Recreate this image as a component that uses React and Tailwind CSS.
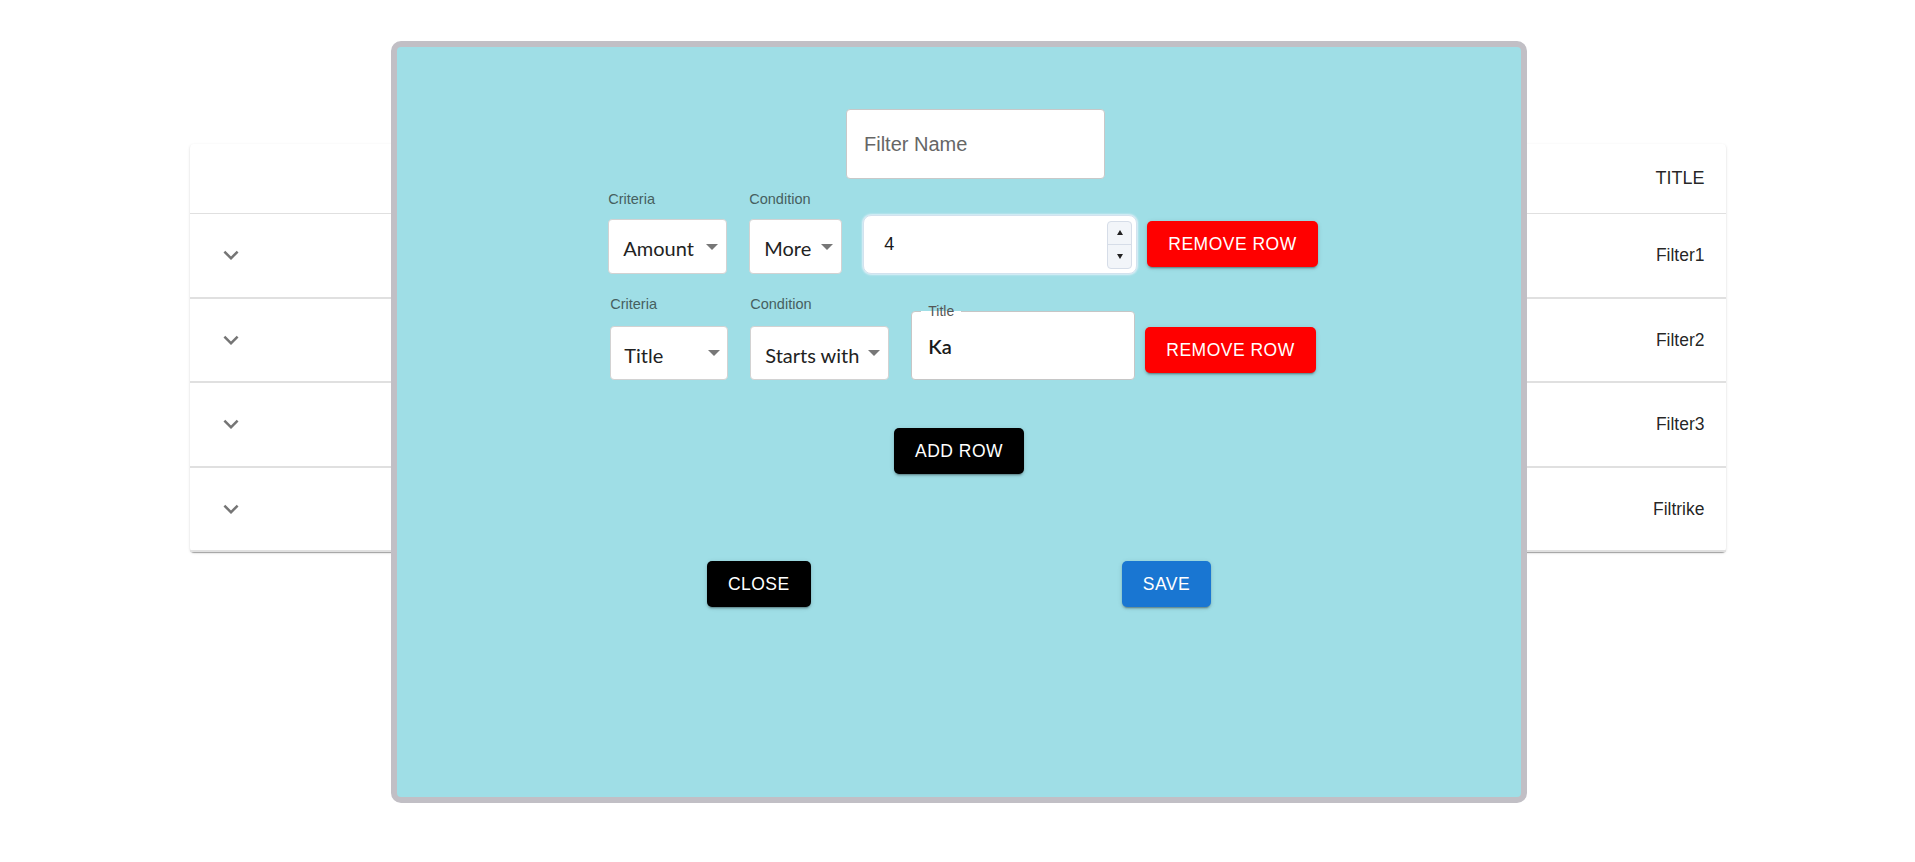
const ROWS = ["Filter1", "Filter2", "Filter3", "Filtrike"];

const SANS = "font-['Liberation_Sans',Arial,sans-serif]";
const LATO = "font-['Lato','Liberation_Sans',sans-serif]";

function Chevron() {
  return (
    <svg viewBox="0 0 24 24" className="w-[30px] h-[30px] fill-[#757575]">
      <path d="M7.41 8.59 12 13.17l4.59-4.58L18 10l-6 6-6-6 1.41-1.41z" />
    </svg>
  );
}

function Caret() {
  return (
    <span className="w-0 h-0 border-l-[6px] border-r-[6px] border-t-[6px] border-l-transparent border-r-transparent border-t-[#777]" />
  );
}

function SelectField({ label, value, width, height, gap, pl, pr }) {
  return (
    <div className="flex flex-col" style={{ width }}>
      <div className={`h-[18px] leading-[18px] text-[14.5px] text-[#46605f] ${SANS}`}>{label}</div>
      <div
        className={`flex items-center justify-between bg-white border border-[#d2d2d2] rounded-[4px] text-[20px] text-[#222] ${LATO}`}
        style={{ height, marginTop: gap, paddingLeft: pl, paddingRight: pr }}
      >
        <span className="pt-[3px]">{value}</span>
        <Caret />
      </div>
    </div>
  );
}

function MuiButton({ children, className = "" }) {
  return (
    <button
      className={`h-[46px] px-[21px] rounded-[5px] text-white uppercase text-[17.5px] tracking-[0.5px] shadow-[0_3px_1px_-2px_rgba(0,0,0,0.2),0_2px_2px_0_rgba(0,0,0,0.14),0_1px_5px_0_rgba(0,0,0,0.12)] ${SANS} ${className}`}
    >
      {children}
    </button>
  );
}

function NumberInput() {
  return (
    <div className="w-[274px] h-[59px] flex items-center bg-white rounded-[8px] border border-[#d3e2ee] shadow-[0_0_2px_1px_rgba(232,242,250,0.9)] pl-[20px] pr-[4px]">
      <span className={`text-[18px] text-[#1a1a1a] ${SANS}`}>4</span>
      <div className="ml-auto w-[25px] h-[48px] flex flex-col bg-[#f2f5f9] border border-[#d6dde8] rounded-[4px]">
        <div className="flex-1 flex items-center justify-center">
          <span className="w-0 h-0 border-l-[3.5px] border-r-[3.5px] border-b-[5px] border-l-transparent border-r-transparent border-b-[#222]" />
        </div>
        <div className="flex-1 flex items-center justify-center border-t border-[#d6dde8]">
          <span className="w-0 h-0 border-l-[3.5px] border-r-[3.5px] border-t-[5px] border-l-transparent border-r-transparent border-t-[#222]" />
        </div>
      </div>
    </div>
  );
}

function TitleField() {
  return (
    <div className="relative w-[224px] h-[69px] bg-white border border-[#c6c6c6] rounded-[4px] flex items-center pl-[16px]">
      <span className="absolute -top-px left-[9px] w-[40px] h-px bg-white" />
      <span className={`absolute -top-[9px] left-[16px] text-[14px] leading-[16px] text-[#555] ${SANS}`}>Title</span>
      <span className={`text-[20px] font-semibold text-[#1a1a1a] ${LATO}`}>Ka</span>
    </div>
  );
}

export default function App() {
  return (
    <div className={`relative w-full h-[862px] overflow-hidden bg-white ${SANS}`}>
      {/* table behind the dialog */}
      <div className="w-[1536px] mx-auto mt-[144px] bg-white rounded-[4px] shadow-[0_2px_1px_-1px_rgba(0,0,0,0.2),0_1px_1px_0_rgba(0,0,0,0.14),0_1px_3px_0_rgba(0,0,0,0.12)]">
        <div className="h-[70px] flex items-center justify-end pr-[21px] border-b border-[#e0e0e0] text-[18px] text-[rgba(0,0,0,0.87)]">
          TITLE
        </div>
        {ROWS.map((name) => (
          <div
            key={name}
            className="h-[84.5px] flex items-center justify-between pl-[26px] pr-[21px] border-b-2 border-[#e0e0e0] text-[17.5px] text-[rgba(0,0,0,0.87)]"
          >
            <Chevron />
            <span>{name}</span>
          </div>
        ))}
      </div>

      {/* dialog */}
      <div className="absolute left-[391px] top-[41px] w-[1136px] h-[762px] border-[6px] border-[#c1bfc5] rounded-[10px] bg-[#9fdee6] flex flex-col">
        <div className="mt-[62px] flex justify-center pl-[33px]">
          <div className="w-[259px] h-[70px] bg-white border border-[#c8c8c8] rounded-[4px] flex items-center pl-[17px] text-[20px] text-[#666]">
            Filter Name
          </div>
        </div>

        <div className="mt-[11px] flex justify-center items-end pl-[8px]">
          <SelectField label="Criteria" value="Amount" width={119} height={55} gap={11} pl={14} pr={8} />
          <div className="ml-[22px]">
            <SelectField label="Condition" value="More" width={93} height={55} gap={11} pl={14} pr={8} />
          </div>
          <div className="ml-[21px]">
            <NumberInput />
          </div>
          <MuiButton className="ml-[10px] mb-[7px] bg-[#ff0000]">Remove Row</MuiButton>
        </div>

        <div className="mt-[21px] flex justify-center items-end pl-[8px]">
          <SelectField label="Criteria" value="Title" width={118} height={54} gap={13} pl={13} pr={7} />
          <div className="ml-[22px]">
            <SelectField label="Condition" value="Starts with" width={139} height={54} gap={13} pl={14} pr={8} />
          </div>
          <div className="ml-[22px]">
            <TitleField />
          </div>
          <MuiButton className="ml-[10px] mb-[7px] bg-[#ff0000]">Remove Row</MuiButton>
        </div>

        <div className="mt-[48px] flex justify-center">
          <MuiButton className="bg-black">Add Row</MuiButton>
        </div>

        <div className="mt-[87px] flex justify-center gap-[311px]">
          <MuiButton className="bg-black">Close</MuiButton>
          <MuiButton className="bg-[#1976d2]">Save</MuiButton>
        </div>
      </div>
    </div>
  );
}
